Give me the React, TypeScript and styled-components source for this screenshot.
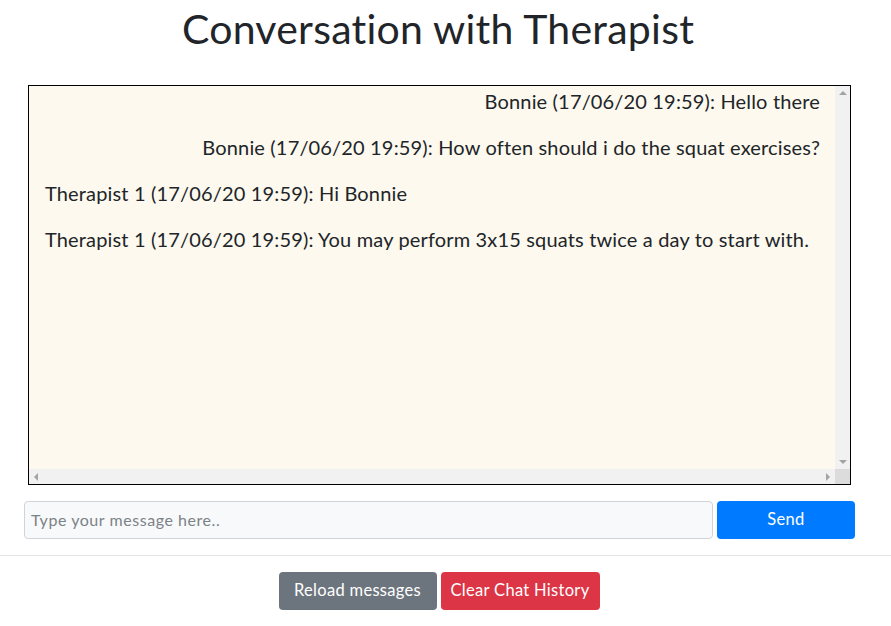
import React from "react";
import styled, { createGlobalStyle } from "styled-components";

const Global = createGlobalStyle`
  html, body { margin: 0; padding: 0; background: #fff; }
  body {
    font-family: Lato, "Open Sans", sans-serif;
    font-variant-ligatures: none;
    color: #212529;
  }
  * { box-sizing: border-box; }
`;

const Page = styled.div`
  display: flex;
  flex-direction: column;
  width: 891px;
`;

const Section = styled.div`
  width: 876px;
`;

const Title = styled.h1`
  margin: 5px 0 0;
  height: 80px;
  font-size: 41px;
  font-weight: 400;
  letter-spacing: 0.25px;
  line-height: 48px;
  text-align: center;
  color: #212529;
`;

const ChatFrame = styled.div`
  margin: 0 0 0 28px;
  width: 823px;
  height: 400px;
  border: 1px solid #000;
  display: grid;
  grid-template-columns: 1fr 15px;
  grid-template-rows: 1fr 15px;
`;

const ChatContent = styled.div`
  background: #fdf9ee;
  overflow: hidden;
  padding: 0 15px 0 16px;
`;

const Track = styled.div<{ $vertical?: boolean }>`
  background: #f1f1f1;
  display: flex;
  flex-direction: ${(p) => (p.$vertical ? "column" : "row")};
  justify-content: space-between;
  align-items: center;
  padding: ${(p) => (p.$vertical ? "5px 0" : "0 5px")};
`;

const Corner = styled.div`
  background: #dcdcdc;
`;

const Arrow = styled.span<{ $dir: "up" | "down" | "left" | "right" }>`
  width: 0;
  height: 0;
  border-style: solid;
  ${(p) =>
    p.$dir === "up"
      ? "border-width: 0 4px 4px 4px; border-color: transparent transparent #a3a3a3 transparent;"
      : p.$dir === "down"
      ? "border-width: 4px 4px 0 4px; border-color: #a3a3a3 transparent transparent transparent;"
      : p.$dir === "left"
      ? "border-width: 4px 4px 4px 0; border-color: transparent #a3a3a3 transparent transparent;"
      : "border-width: 4px 0 4px 4px; border-color: transparent transparent transparent #a3a3a3;"}
`;

const Message = styled.p<{ $mine: boolean }>`
  margin: 0 0 16px;
  font-size: 20px;
  letter-spacing: 0.16px;
  line-height: 30px;
  text-align: ${(p) => (p.$mine ? "right" : "left")};
  white-space: nowrap;
`;

const InputRow = styled.form`
  display: flex;
  gap: 4px;
  margin: 16px 21px 0 24px;
`;

const TextInput = styled.input`
  flex: 1;
  height: 38px;
  padding: 4px 6px 6px;
  font-family: inherit;
  font-size: 16px;
  letter-spacing: 0.55px;
  color: #495057;
  background: #f8f9fa;
  border: 1px solid #ced4da;
  border-radius: 4px;
  outline: none;
  &::placeholder { color: #7b8288; }
`;

const Button = styled.button<{ $bg: string; $w: number }>`
  width: ${(p) => p.$w}px;
  height: 38px;
  padding: 0 0 3px;
  font-family: inherit;
  font-size: 16.5px;
  letter-spacing: 0.3px;
  white-space: nowrap;
  color: #fff;
  background: ${(p) => p.$bg};
  border: none;
  border-radius: 4px;
  cursor: pointer;
`;

const Rule = styled.hr`
  margin: 16px 0 0;
  border: none;
  border-top: 1px solid #e5e5e5;
  width: 100%;
`;

const Actions = styled.div`
  display: flex;
  justify-content: center;
  gap: 4px;
  padding: 16px 0 0 2px;
`;

const messages = [
  { mine: true, text: "Bonnie (17/06/20 19:59): Hello there" },
  { mine: true, text: "Bonnie (17/06/20 19:59): How often should i do the squat exercises?" },
  { mine: false, text: "Therapist 1 (17/06/20 19:59): Hi Bonnie" },
  { mine: false, text: "Therapist 1 (17/06/20 19:59): You may perform 3x15 squats twice a day to start with." },
];

export default function App() {
  return (
    <Page>
      <Global />
      <Section>
        <Title>Conversation with Therapist</Title>
        <ChatFrame>
          <ChatContent>
            {messages.map((m, i) => (
              <Message key={i} $mine={m.mine}>{m.text}</Message>
            ))}
          </ChatContent>
          <Track $vertical>
            <Arrow $dir="up" />
            <Arrow $dir="down" />
          </Track>
          <Track>
            <Arrow $dir="left" />
            <Arrow $dir="right" />
          </Track>
          <Corner />
        </ChatFrame>
        <InputRow onSubmit={(e) => e.preventDefault()}>
          <TextInput placeholder="Type your message here.." />
          <Button type="submit" $bg="#007bff" $w={138}>Send</Button>
        </InputRow>
      </Section>
      <Rule />
      <Section>
        <Actions>
          <Button type="button" $bg="#6c757d" $w={158}>Reload messages</Button>
          <Button type="button" $bg="#dc3545" $w={159}>Clear Chat History</Button>
        </Actions>
      </Section>
    </Page>
  );
}
